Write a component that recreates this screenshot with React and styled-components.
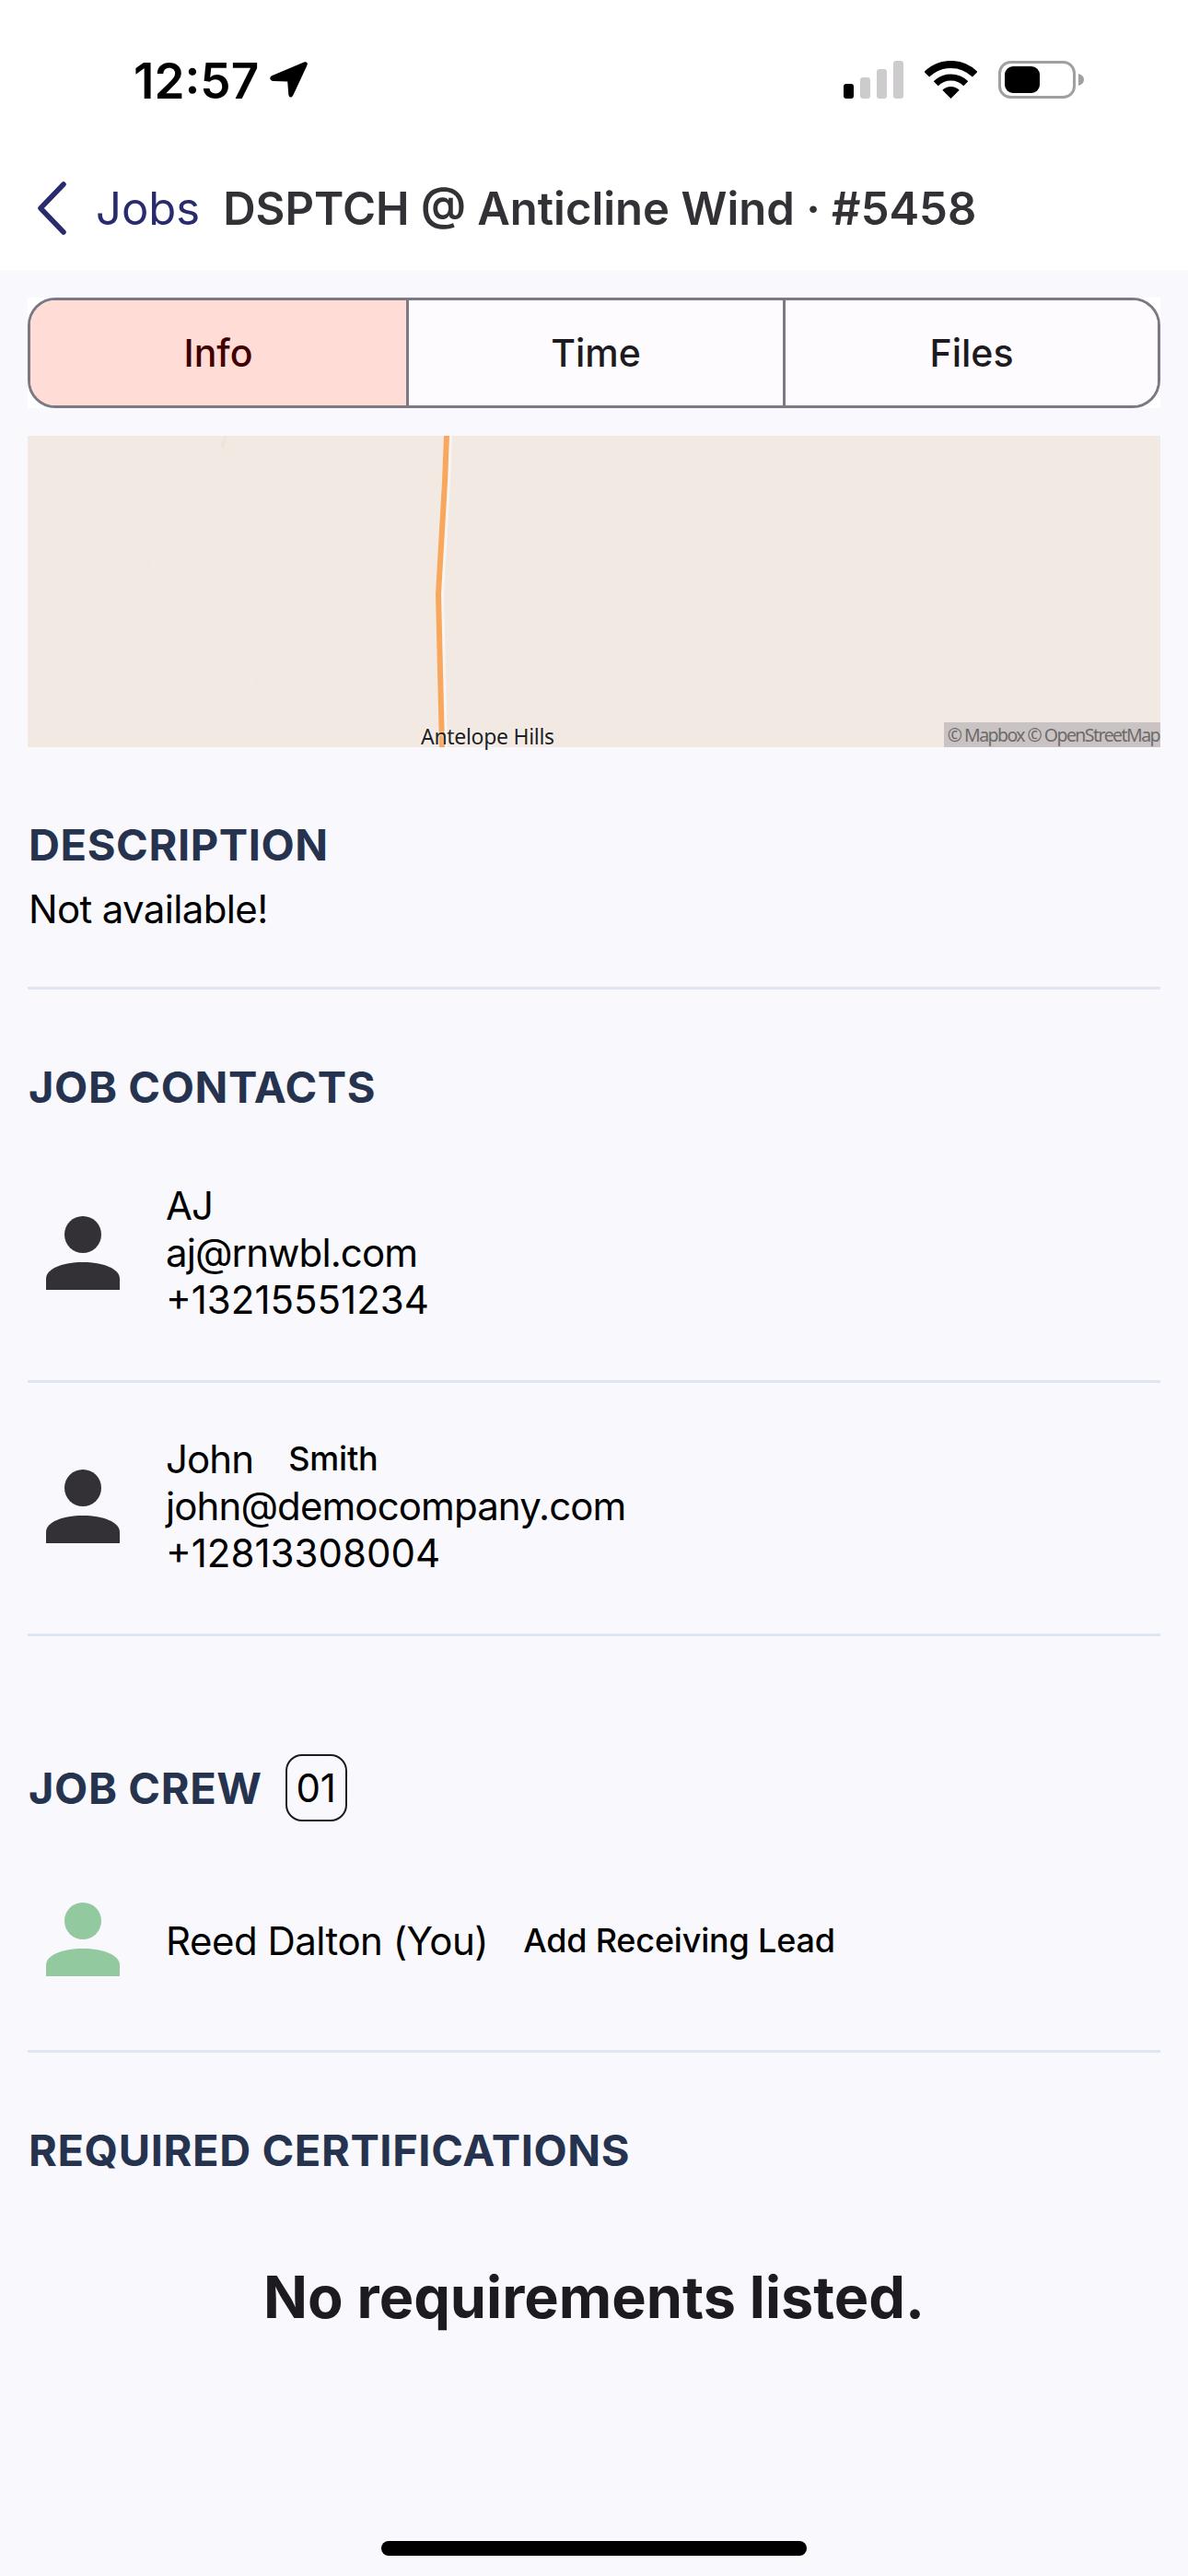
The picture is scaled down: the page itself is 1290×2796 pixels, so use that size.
import styled, { createGlobalStyle } from "styled-components";

const GlobalStyle = createGlobalStyle`
  html, body {
    margin: 0;
    padding: 0;
    background: #f8f8fd;
  }
  * {
    box-sizing: border-box;
  }
`;

const tabs = ["Info", "Time", "Files"];

const contacts = [
  { first: "AJ", email: "aj@rnwbl.com", phone: "+13215551234" },
  { first: "John", last: "Smith", email: "john@democompany.com", phone: "+12813308004" },
];

function Person({ color }) {
  return (
    <AvatarSvg viewBox="0 0 80 80" fill={color}>
      <circle cx="40" cy="20" r="20" />
      <path d="M0 80V68C0 57 18 50 40 50C62 50 80 57 80 68V80Z" />
    </AvatarSvg>
  );
}

export default function App() {
  return (
    <Screen>
      <GlobalStyle />
      <Header>
        <StatusBar>
          <TimeGroup>
            <Clock>12:57</Clock>
            <svg width="41" height="40" viewBox="0 0 41 40">
              <path d="M37 1.5C40 .6 41.6 2 40.4 5L25.5 37C23.8 40.6 20.6 40.4 20.3 36.5L19.2 22.6L4 22C-.4 21.6-1 17.6 2.6 16Z" fill="#000" />
            </svg>
          </TimeGroup>
          <StatusIcons>
            <svg width="65" height="41" viewBox="0 0 65 41">
              <rect x="0" y="25" width="11" height="16" rx="3" fill="#000" />
              <rect x="18" y="18" width="11" height="23" rx="3" fill="#cdcbce" />
              <rect x="36" y="9" width="11" height="32" rx="3" fill="#cdcbce" />
              <rect x="54" y="0" width="11" height="41" rx="3" fill="#cdcbce" />
            </svg>
            <svg width="57" height="41" viewBox="0 0 57 41" fill="none" stroke="#000">
              <path d="M2.3 14.8A37 37 0 0 1 54.7 14.8" strokeWidth="8" />
              <path d="M12.2 24.7A23 23 0 0 1 44.8 24.7" strokeWidth="7" />
              <path d="M28.5 41L19.3 31.8A13 13 0 0 1 37.7 31.8Z" fill="#000" stroke="none" />
            </svg>
            <svg width="93" height="41" viewBox="0 0 93 41">
              <rect x="1.5" y="1.5" width="81" height="38" rx="12" fill="none" stroke="#a09fa2" strokeWidth="3" />
              <path d="M87 14C91 15 93 17.5 93 20.5C93 23.5 91 26 87 27Z" fill="#a09fa2" />
              <rect x="7" y="6" width="38" height="29" rx="9" fill="#000" />
            </svg>
          </StatusIcons>
        </StatusBar>
        <NavBar>
          <svg width="32" height="58" viewBox="0 0 32 58" fill="none" stroke="#2a2b6e" strokeWidth="5.5" strokeLinecap="round" strokeLinejoin="round">
            <polyline points="29,3 4,29 29,55" />
          </svg>
          <BackLabel>Jobs</BackLabel>
          <NavTitle>DSPTCH @ Anticline Wind · #5458</NavTitle>
        </NavBar>
      </Header>

      <Content>
        <TabsBacking>
          <Tabs>
            {tabs.map((tab, index) => (
              <Tab key={tab} $active={index === 0}>
                {tab}
              </Tab>
            ))}
          </Tabs>
        </TabsBacking>

        <MapBox>
          <MapDrawing viewBox="0 0 1230 338" preserveAspectRatio="none">
            <path d="M458 0L456 50L449 172L453 338" fill="none" stroke="#f8f5f3" strokeWidth="6" />
            <path d="M455 0L453 50L446 172L450 338" fill="none" stroke="#f9a75c" strokeWidth="6" />
            <path d="M215 0L211 13" stroke="#ebe6dc" strokeWidth="4" />
            <path d="M127 143L125 146M133 138L131 142M146 132L145 137" stroke="#ede9e1" strokeWidth="3" />
            <path d="M251 267L248 273" stroke="#ede9e1" strokeWidth="4" />
          </MapDrawing>
          <PlaceLabel>Antelope Hills</PlaceLabel>
          <Attribution>© Mapbox © OpenStreetMap</Attribution>
        </MapBox>

        <DescriptionSection>
          <SectionTitle>DESCRIPTION</SectionTitle>
          <DescriptionText>Not available!</DescriptionText>
        </DescriptionSection>
        <Divider />

        <ContactsTitle>JOB CONTACTS</ContactsTitle>
        <ContactList>
          {contacts.map((contact) => (
            <div key={contact.email}>
              <ContactRow>
                <Person color="#333135" />
                <ContactText>
                  <NameLine>
                    {contact.first}
                    {contact.last && <SmallAction>{contact.last}</SmallAction>}
                  </NameLine>
                  <BodyText>{contact.email}</BodyText>
                  <PhoneText>{contact.phone}</PhoneText>
                </ContactText>
              </ContactRow>
              <Divider />
            </div>
          ))}
        </ContactList>

        <CrewHeader>
          <SectionTitle>JOB CREW</SectionTitle>
          <CountBadge>01</CountBadge>
        </CrewHeader>
        <CrewRow>
          <Person color="#92c99e" />
          <CrewName>
            Reed Dalton (You)
            <SmallAction>Add Receiving Lead</SmallAction>
          </CrewName>
        </CrewRow>
        <Divider />

        <CertsTitle>REQUIRED CERTIFICATIONS</CertsTitle>
        <EmptyMessage>No requirements listed.</EmptyMessage>
      </Content>

      <HomeIndicator />
    </Screen>
  );
}

/* ================= Styles ================= */

const Screen = styled.div`
  position: relative;
  width: 1290px;
  height: 2796px;
  overflow: hidden;
  background: #f8f8fd;
  font-family: Inter, "Liberation Sans", sans-serif;
  color: #000;
`;

const Header = styled.header`
  height: 293px;
  background: #fff;
`;

const StatusBar = styled.div`
  display: flex;
  justify-content: space-between;
  height: 176px;
  padding: 66px 113px 0 145px;
`;

const TimeGroup = styled.div`
  display: flex;
  align-items: flex-start;
  gap: 12px;
`;

const Clock = styled.span`
  font-size: 53px;
  font-weight: 600;
  line-height: 43px;
  margin-top: 1px;
`;

const StatusIcons = styled.div`
  display: flex;
  align-items: flex-start;
  gap: 23px;
`;

const NavBar = styled.nav`
  display: flex;
  align-items: center;
  height: 100px;
  padding-left: 40px;
`;

const BackLabel = styled.span`
  margin-left: 32px;
  font-size: 49px;
  color: #2a2b6e;
`;

const NavTitle = styled.h1`
  margin: 0 0 0 25px;
  font-size: 49px;
  font-weight: 600;
  color: #333135;
`;

const Content = styled.main`
  padding: 30px 30px 0;
`;

const TabsBacking = styled.div`
  background: #fff;
`;

const Tabs = styled.div`
  display: grid;
  grid-template-columns: 408px 409px 1fr;
  height: 120px;
  border: 3px solid #7d7984;
  border-radius: 30px;
  overflow: hidden;
  background: #fefbff;
`;

const Tab = styled.div`
  display: flex;
  align-items: center;
  justify-content: center;
  font-size: 41px;
  font-weight: 500;
  background: ${({ $active }) => ($active ? "#ffdcd6" : "#fefbff")};
  color: ${({ $active }) => ($active ? "#410002" : "#1d1b20")};

  & + & {
    border-left: 3px solid #7d7984;
  }
`;

const MapBox = styled.div`
  position: relative;
  height: 338px;
  margin-top: 30px;
  background: #f2e9e3;
`;

const MapDrawing = styled.svg`
  display: block;
  width: 100%;
  height: 100%;
`;

const PlaceLabel = styled.span`
  position: absolute;
  left: 427px;
  bottom: 1px;
  font-family: "Noto Sans", sans-serif;
  font-size: 23px;
  line-height: 22px;
  letter-spacing: -0.3px;
  color: #222;
  text-shadow: 0 0 3px #fff;
`;

const Attribution = styled.span`
  position: absolute;
  right: 0;
  bottom: 0;
  height: 27px;
  padding: 0 1px 0 4px;
  background: #c9c4c3;
  font-family: "Noto Sans", sans-serif;
  font-size: 19.5px;
  line-height: 27px;
  letter-spacing: -1.55px;
  color: #6e6a6a;
`;

const DescriptionSection = styled.section`
  margin-top: 78px;
  padding-bottom: 59px;
`;

const SectionTitle = styled.h2`
  margin: 0;
  padding-left: 1px;
  font-size: 47px;
  font-weight: 700;
  line-height: 56px;
  letter-spacing: 0.6px;
  color: #26334f;
`;

const BodyText = styled.div`
  font-size: 42px;
  line-height: 51px;
  letter-spacing: -0.9px;
  color: #000;
`;

const PhoneText = styled(BodyText)`
  letter-spacing: 0;
`;

const DescriptionText = styled(BodyText)`
  margin-top: 16px;
  padding-left: 1px;
  letter-spacing: -0.65px;
`;

const Divider = styled.div`
  height: 3px;
  background: #e0e5f2;
`;

const ContactsTitle = styled(SectionTitle)`
  margin-top: 78px;
`;

const ContactList = styled.div`
  margin-top: 18px;
`;

const ContactRow = styled.div`
  display: flex;
  align-items: center;
  gap: 50px;
  padding: 57px 0 62px 20px;
`;

const AvatarSvg = styled.svg`
  flex: none;
  width: 80px;
  height: 80px;
`;

const ContactText = styled.div`
  display: flex;
  flex-direction: column;
`;

const NameLine = styled.div`
  display: flex;
  align-items: center;
  gap: 38px;
  font-size: 42px;
  line-height: 51px;
  letter-spacing: -0.9px;
`;

const CrewName = styled(NameLine)`
  margin-top: 3px;
  letter-spacing: -0.5px;
`;

const SmallAction = styled.span`
  font-size: 36px;
  font-weight: 500;
  letter-spacing: -0.2px;
`;

const CrewHeader = styled.div`
  display: flex;
  align-items: center;
  gap: 25px;
  margin-top: 128px;
`;

const CountBadge = styled.div`
  display: flex;
  align-items: center;
  justify-content: center;
  width: 67px;
  height: 73px;
  border: 2px solid #1d1b20;
  border-radius: 18px;
  font-size: 42px;
`;

const CrewRow = styled(ContactRow)`
  padding: 88px 0 80px 20px;
`;

const CertsTitle = styled(SectionTitle)`
  margin-top: 78px;
`;

const EmptyMessage = styled.div`
  margin-top: 91px;
  text-align: center;
  font-size: 63px;
  font-weight: 700;
  line-height: 80px;
  color: #1d1b20;
`;

const HomeIndicator = styled.div`
  position: absolute;
  left: 414px;
  bottom: 22px;
  width: 462px;
  height: 16px;
  border-radius: 8px;
  background: #000;
`;
